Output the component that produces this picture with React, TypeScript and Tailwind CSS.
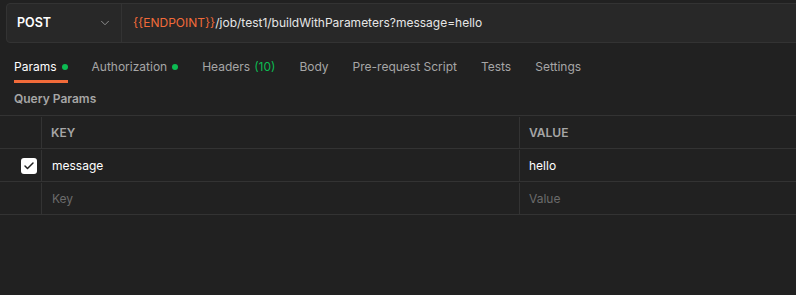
import { ChevronDown, Check } from "lucide-react";

const tabs = [
  { label: "Params", dot: true, active: true },
  { label: "Authorization", dot: true },
  { label: "Headers", count: "(10)" },
  { label: "Body" },
  { label: "Pre-request Script" },
  { label: "Tests" },
  { label: "Settings" },
];

export default function App() {
  return (
    <div
      className="h-[295px] w-[796px] overflow-hidden bg-[#212121] text-[12px] text-[#e6e6e6]"
      style={{ fontFamily: "Inter, 'Noto Sans', sans-serif" }}
    >
      <div className="pl-[6px] pt-[3px]">
        <div className="-mr-2 flex h-[40px] rounded-[4px] border border-[#333] bg-[#282828]">
          <div className="flex w-[115px] items-center justify-between border-r border-[#333] pl-[10px] pr-[9px]">
            <span className="text-[12.5px] font-semibold text-white">POST</span>
            <ChevronDown size={14} strokeWidth={1.5} className="text-[#9a9a9a]" />
          </div>
          <div className="flex items-center pl-[11px] text-[12px] text-[#e6e6e6]">
            <span className="text-[#f26b3a]">{"{{ENDPOINT}}"}</span>
            <span>/job/test1/buildWithParameters?message=hello</span>
          </div>
        </div>
      </div>

      <div className="flex h-[40px] items-end gap-[24px] pl-[14px]">
        {tabs.map((t) => (
          <div
            key={t.label}
            className={
              "flex h-[29px] items-center border-b-[3px] text-[12px] " +
              (t.active ? "border-[#f26b3a] text-white" : "border-transparent text-[#a6a6a6]")
            }
          >
            <span>{t.label}</span>
            {t.count ? <span className="ml-1 text-[#0cbb52]">{t.count}</span> : null}
            {t.dot ? <span className="ml-[5px] h-[6px] w-[6px] rounded-full bg-[#0cbb52]" /> : null}
          </div>
        ))}
      </div>

      <div className="flex h-[32px] items-center pl-[14px] text-[12px] font-semibold text-[#a6a6a6]">
        Query Params
      </div>

      <div className="border-t border-[#333] text-[12px]">
        <div className="flex h-[33px] border-b border-[#333] pt-[1px] font-semibold text-[#a6a6a6]">
          <div className="w-[42px] border-r border-[#333]" />
          <div className="flex w-[478px] items-center border-r border-[#333] pl-[9px]">KEY</div>
          <div className="flex flex-1 items-center pl-[9px]">VALUE</div>
        </div>
        <div className="flex h-[33px] border-b border-[#333] pt-[1px] text-white">
          <div className="flex w-[42px] items-center border-r border-[#333] pl-[21px]">
            <div className="flex h-[16px] w-[16px] items-center justify-center rounded-[3px] bg-white">
              <Check size={12} strokeWidth={3} className="text-[#212121]" />
            </div>
          </div>
          <div className="flex w-[478px] items-center border-r border-[#333] pl-[10px]">message</div>
          <div className="flex flex-1 items-center pl-[9px]">hello</div>
        </div>
        <div className="flex h-[33px] border-b border-[#333] pt-[1px] text-[#6b6b6b]">
          <div className="w-[42px] border-r border-[#333]" />
          <div className="flex w-[478px] items-center border-r border-[#333] pl-[10px]">Key</div>
          <div className="flex flex-1 items-center pl-[9px]">Value</div>
        </div>
      </div>
    </div>
  );
}
